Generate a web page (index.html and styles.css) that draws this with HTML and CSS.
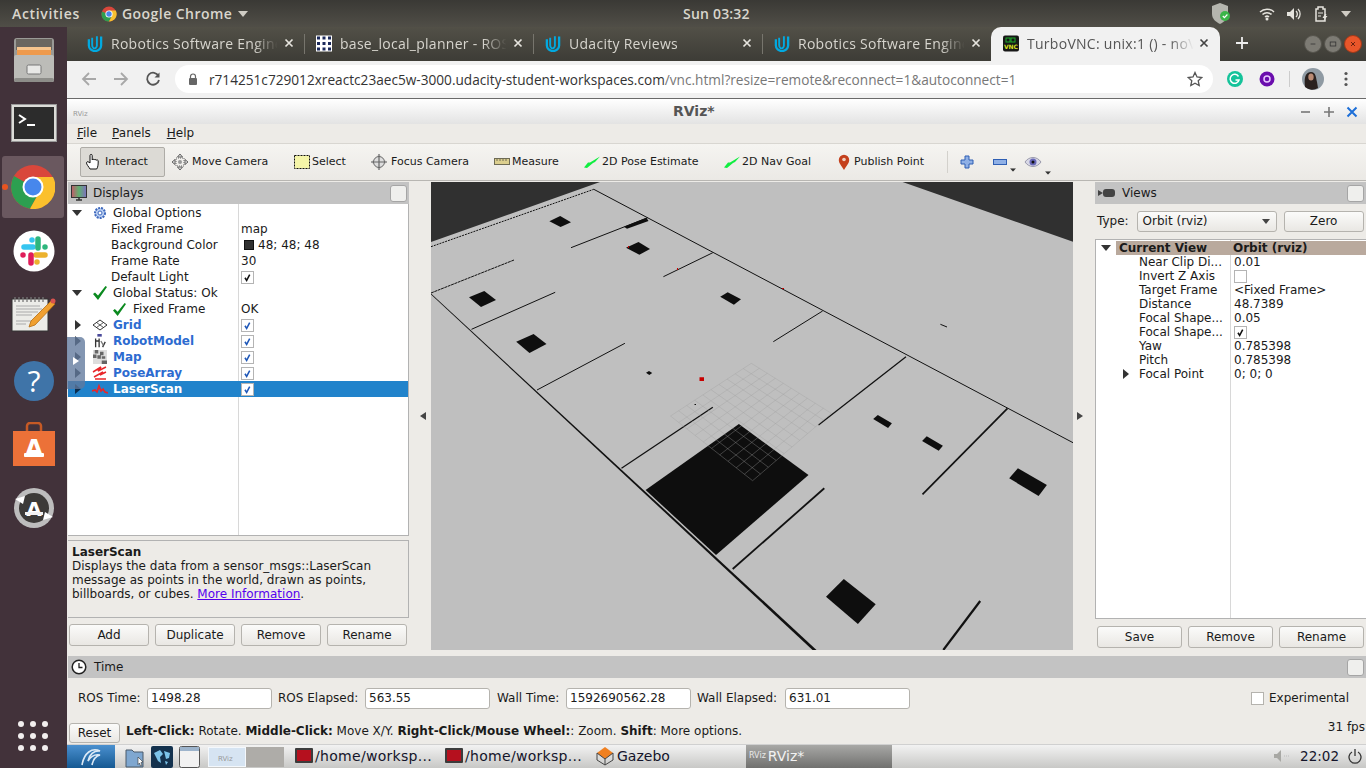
FILE: index.html
```html
<!DOCTYPE html>
<html lang="en">
<head>
<meta charset="utf-8">
<title>RViz over TurboVNC</title>
<link rel="stylesheet" href="styles.css">
</head>
<body>
<svg class="defs" width="0" height="0" aria-hidden="true">
  <symbol id="udacity" viewBox="0 0 16 18"><path d="M1.5 4.5v6.5a6.5 6 0 0 0 13 0V1.5" fill="none" stroke="#02a9e0" stroke-width="2.4"/><path d="M10 1.2v10.3a2.6 2.6 0 0 1-3.6 2.4C5.3 13 5 12 5 10.5V3" fill="none" stroke="#02a9e0" stroke-width="2"/></symbol>
  <symbol id="x" viewBox="0 0 10 10"><path d="M1.5 1.5l7 7M8.5 1.5l-7 7" fill="none" stroke="currentColor" stroke-width="1.7"/></symbol>
  <symbol id="check" viewBox="0 0 13 13"><path d="M3.5 6.8l2 3.2 3.6-7" fill="none" stroke="currentColor" stroke-width="1.8"/></symbol>
  <symbol id="ok" viewBox="0 0 14 14"><path d="M0 8l2-1.500 3 3L12.500 0 14 1 5 14z" fill="#0b8a1f"/></symbol>
  <symbol id="greenarrow" viewBox="0 0 16 12"><path d="M0 11.500L4 6.500 6 6.500 16 .5 11 6 9 7 3 12z" fill="#10ee40"/></symbol>
  <symbol id="tri-d" viewBox="0 0 10 6"><path d="M0 0h10L5 6z" fill="currentColor"/></symbol>
</svg>

<header class="topbar">
  <span class="activities">Activities</span>
  <svg class="top-chrome" viewBox="0 0 16 16"><circle cx="8" cy="8" r="7.5" fill="#d9473b"/><path d="M8 8L1.5 12a7.5 7.5 0 0 0 6.5 3.5z" fill="#2f9e4f"/><path d="M1 5.5a7.5 7.5 0 0 0 .5 6.5L8 15.5 11 10z" fill="#2f9e4f"/><path d="M8 4.5h6.8A7.5 7.5 0 0 1 8 15.5L11 10z" fill="#f5c030"/><circle cx="8" cy="8" r="3.6" fill="#fff"/><circle cx="8" cy="8" r="2.7" fill="#4a86e8"/></svg>
  <span class="appname">Google Chrome</span>
  <svg class="top-tri" viewBox="0 0 10 6"><use href="#tri-d"/></svg>
  <span class="clock">Sun 03:32</span>
  <svg class="tray-shield" viewBox="0 0 20 24"><path d="M9 1l8 3v8c0 5-4 8-8 10-4-2-8-5-8-10V4z" fill="#b5b5ae"/><circle cx="14" cy="14" r="5" fill="#3cb54a"/><path d="M11.800 14l1.600 1.700 3-3.200" fill="none" stroke="#fff" stroke-width="1.200"/></svg>
  <svg class="tray-wifi" viewBox="0 0 16 14"><path d="M1 5a10 10 0 0 1 14 0M3.500 7.500a6.500 6.500 0 0 1 9 0M6 10a3 3 0 0 1 4 0" fill="none" stroke="#e6e4de" stroke-width="1.500"/><circle cx="8" cy="12" r="1.500" fill="#e6e4de"/></svg>
  <svg class="tray-vol" viewBox="0 0 16 14"><path d="M1 5h3l4-4v12l-4-4H1z" fill="#e6e4de"/><path d="M10 4a4 4 0 0 1 0 6M12 2a7 7 0 0 1 0 10" fill="none" stroke="#e6e4de" stroke-width="1.300"/></svg>
  <svg class="tray-bat" viewBox="0 0 14 16"><path d="M1 3h2V1h5v2h2v12H1z" fill="none" stroke="#e6e4de" stroke-width="1.500"/><path d="M3 7h5M3 10h3" stroke="#e6e4de"/><path d="M10 8l-2.500 4h2l-1 3 4-5h-2l1-2z" fill="#e6e4de"/></svg>
  <svg class="tray-tri" viewBox="0 0 10 6"><use href="#tri-d"/></svg>
</header>

<div class="below">
  <nav class="dock">
    <div class="dock-item">
      <svg class="ic-cab" viewBox="0 0 42 44"><rect x="1" y="0" width="40" height="44" rx="3" fill="#9a9a96"/><rect x="3" y="1" width="36" height="11" fill="#6a6660"/><rect x="4" y="9" width="34" height="3" fill="#f6c48e"/><rect x="4" y="12" width="34" height="5" fill="#ee9a4d"/><rect x="1" y="17" width="40" height="27" rx="2" fill="#bcbcb8"/><rect x="1" y="40" width="40" height="4" rx="2" fill="#8d8d89"/><rect x="14" y="27" width="14" height="9" rx="1.500" fill="#e8e8e6" stroke="#777"/></svg>
    </div>
    <div class="dock-item">
      <svg class="ic-term" viewBox="0 0 46 38"><rect x=".5" y=".5" width="45" height="37" fill="#dcdcd8" stroke="#999"/><rect x="3" y="3" width="40" height="32" fill="#2c2c2c"/><path d="M8 11l6 4-6 4" fill="none" stroke="#fff" stroke-width="2"/><path d="M16 21h8" stroke="#fff" stroke-width="2"/></svg>
    </div>
    <div class="dock-item dock-active">
      <span class="dock-dot"></span>
      <svg class="ic-chrome" viewBox="0 0 44 44"><circle cx="22" cy="22" r="22" fill="#d9473b"/><path d="M3 11a22 22 0 0 0 16 32.800L29 26z" fill="#2c9f50"/><path d="M22 12h20a22 22 0 0 1-23 31.800L29 26z" fill="#fbc02d"/><circle cx="22" cy="22" r="10.500" fill="#fff"/><circle cx="22" cy="22" r="8.500" fill="#4787ec"/></svg>
    </div>
    <div class="dock-item">
      <svg class="ic-slack" viewBox="0 0 42 42"><circle cx="21" cy="21" r="20.500" fill="#fff"/><g stroke-width="5.500" stroke-linecap="round" fill="none"><path d="M11 17h9M19 10v0" stroke="#36c5f0"/><path d="M25 9v9M32 17v0" stroke="#2eb67d"/><path d="M23 25h9M24 32v0" stroke="#ecb22e"/><path d="M18 25v8M10 25v0" stroke="#e01e5a"/></g></svg>
    </div>
    <div class="dock-item">
      <svg class="ic-note" viewBox="0 0 46 36"><rect x="1" y="3" width="36" height="32" fill="#ecece8" stroke="#333"/><path d="M5 10h24M5 13h26M5 16h22M5 19h16M5 25h18M5 28h10" stroke="#aaa"/><path d="M4 1v5M8 1v5M12 1v5M16 1v5M20 1v5M24 1v5M28 1v5M32 1v5" stroke="#777" stroke-width="1.300"/><path d="M20 25l20-20 4 3-20 21-6 2z" fill="#f0a030" stroke="#b46d12" stroke-width=".8"/><circle cx="42" cy="5" r="2.500" fill="#d9534f"/></svg>
    </div>
    <div class="dock-item dock-help">
      <svg class="ic-help" viewBox="0 0 40 40"><circle cx="20" cy="20" r="20" fill="#3f74a8"/><text x="20" y="31" text-anchor="middle" class="help-q">?</text></svg>
    </div>
    <div class="dock-item">
      <svg class="ic-store" viewBox="0 0 42 44"><path d="M14 10V4a3 3 0 0 1 3-3h8a3 3 0 0 1 3 3v6" fill="none" stroke="#c65a25" stroke-width="2.500"/><rect x="0" y="9" width="42" height="35" fill="#ec7138"/><text x="21" y="35" text-anchor="middle" class="store-a">A</text><rect x="11" y="31" width="20" height="4" rx="1" fill="#fff"/></svg>
    </div>
    <div class="dock-item">
      <svg class="ic-upd" viewBox="0 0 42 42"><circle cx="21" cy="21" r="20" fill="#bdbdbd"/><circle cx="21" cy="21" r="15" fill="#3c3a38"/><path d="M2 12l10-3-2 8zM40 30l-10 3 2-8z" fill="#fff"/><text x="21" y="29" text-anchor="middle" class="upd-a">A</text><rect x="12" y="25" width="18" height="3" fill="#f2f2f2"/></svg>
    </div>
    <div class="dock-grid">
      <i></i><i></i><i></i><i></i><i></i><i></i><i></i><i></i><i></i>
    </div>
  </nav>

  <div class="browser">
    <div class="tabstrip">
      <div class="tab"><svg class="favicon"><use href="#udacity"/></svg><span class="tab-label">Robotics Software Engineer</span><svg class="tab-x"><use href="#x"/></svg></div>
      <div class="tab"><svg class="favicon" viewBox="0 0 16 16"><rect width="16" height="16" fill="#fff"/><path d="M1 2.500h14M1 8h14M1 13.500h14" stroke="#1c2a5c" stroke-width="3" stroke-dasharray="3 2.500"/></svg><span class="tab-label">base_local_planner - ROS Wiki</span><svg class="tab-x"><use href="#x"/></svg></div>
      <div class="tab"><svg class="favicon"><use href="#udacity"/></svg><span class="tab-label">Udacity Reviews</span><svg class="tab-x"><use href="#x"/></svg></div>
      <div class="tab tab-last"><svg class="favicon"><use href="#udacity"/></svg><span class="tab-label">Robotics Software Engineer</span><svg class="tab-x"><use href="#x"/></svg></div>
      <div class="tab tab-active"><svg class="favicon" viewBox="0 0 16 16"><rect width="16" height="16" rx="2" fill="#171717"/><text x="8" y="13" text-anchor="middle" class="vnc">VNC</text><rect x="3" y="2.500" width="4" height="4" fill="none" stroke="#1fae2a"/><rect x="8" y="2.500" width="4" height="4" fill="none" stroke="#1fae2a"/></svg><span class="tab-label">TurboVNC: unix:1 () - noVNC</span><svg class="tab-x"><use href="#x"/></svg></div>
      <svg class="newtab" viewBox="0 0 14 14"><path d="M7 1v12M1 7h12" stroke="#eee" stroke-width="1.800"/></svg>
      <div class="winbtns">
        <span class="winbtn"><svg viewBox="0 0 10 10"><path d="M2 5h6" stroke="#333" stroke-width="1"/></svg></span>
        <span class="winbtn"><svg viewBox="0 0 10 10"><rect x="1.500" y="2.500" width="7" height="5" fill="none" stroke="#333"/></svg></span>
        <span class="winbtn winbtn-close"><svg viewBox="0 0 10 10"><path d="M2.500 2.500l5 5M7.500 2.500l-5 5" stroke="#5a1c0c" stroke-width="1.100"/></svg></span>
      </div>
    </div>

    <div class="omnibar">
      <svg class="nav-ic" viewBox="0 0 16 16"><path d="M15 8H2M8 2L2 8l6 6" fill="none" stroke="#a8a8a8" stroke-width="1.800"/></svg>
      <svg class="nav-ic" viewBox="0 0 16 16"><path d="M1 8h13M8 2l6 6-6 6" fill="none" stroke="#a8a8a8" stroke-width="1.800"/></svg>
      <svg class="nav-ic" viewBox="0 0 16 16"><path d="M13.500 5A6 6 0 1 0 14 9" fill="none" stroke="#555" stroke-width="1.800"/><path d="M14.500 1.500v5h-5z" fill="#555"/></svg>
      <div class="urlbar">
        <svg class="lock" viewBox="0 0 10 12"><path d="M2.500 5V3.500a2.500 2.500 0 0 1 5 0V5" fill="none" stroke="#666" stroke-width="1.200"/><rect x="1" y="5" width="8" height="7" rx="1" fill="#666"/></svg>
        <span class="url"><span class="url-host">r714251c729012xreactc23aec5w-3000.udacity-student-workspaces.com</span>/vnc.html?resize=remote&amp;reconnect=1&amp;autoconnect=1</span>
        <svg class="star" viewBox="0 0 16 16"><path d="M8 1.500l2 4.500 4.800.5-3.600 3.200 1 4.800L8 12.200 3.800 14.500l1-4.800L1.200 6.500 6 6z" fill="none" stroke="#555" stroke-width="1.300"/></svg>
      </div>
      <svg class="ext-g" viewBox="0 0 16 16"><circle cx="8" cy="8" r="8" fill="#15c39a"/><path d="M11.500 5.500A4.500 4.500 0 1 0 12 9H8.500" fill="none" stroke="#fff" stroke-width="1.500"/></svg>
      <svg class="ext-p" viewBox="0 0 16 16"><circle cx="8" cy="8" r="7.500" fill="#6a0dad"/><circle cx="8" cy="8" r="3" fill="none" stroke="#e8c8ff" stroke-width="1.500"/></svg>
      <span class="omni-sep"></span>
      <svg class="avatar" viewBox="0 0 22 22"><circle cx="11" cy="11" r="11" fill="#8f9aa3"/><path d="M3 19c-1-8 0-15 6-15 5 0 5 6 6 10l1 6a11 11 0 0 1-13-1z" fill="#2a211f"/><ellipse cx="9" cy="9" rx="2.700" ry="3.500" fill="#b98a74"/></svg>
      <svg class="menu-dots" viewBox="0 0 4 16"><circle cx="2" cy="2.500" r="1.600" fill="#555"/><circle cx="2" cy="8" r="1.600" fill="#555"/><circle cx="2" cy="13.500" r="1.600" fill="#555"/></svg>
    </div>

    <div class="rviz">
      <div class="rv-title">
        <svg class="rv-logo" viewBox="0 0 18 12"><text x="0" y="10" class="rv-logo-t">RViz</text></svg>
        <span class="rv-title-text">RViz*</span>
        <div class="rv-winbtns">
          <svg viewBox="0 0 12 12"><path d="M1 6h9" stroke="#777" stroke-width="1.600"/></svg>
          <svg viewBox="0 0 12 12"><path d="M1 6h10M6 1v10" stroke="#777" stroke-width="1.600"/></svg>
          <svg viewBox="0 0 12 12"><path d="M1.500 1.500l9 9M10.500 1.500l-9 9" stroke="#1d6fd8" stroke-width="2"/></svg>
        </div>
      </div>
      <div class="rv-menu"><span><u>F</u>ile</span><span><u>P</u>anels</span><span><u>H</u>elp</span></div>
      <div class="rv-tools">
        <div class="tool tool-on"><svg viewBox="0 0 18 18" class="t-ic"><path d="M6 16c-1-2-4-5-3.500-6.500S5 9 6 10V2.500c0-1.500 2.200-1.500 2.200 0V7c0-1 2-1 2 0 0-.8 2-.8 2 .3 0-.7 2-.5 2 .5 0 3 0 6-1.500 8.200z" fill="#fff" stroke="#111" stroke-width="1"/></svg>Interact</div>
        <div class="tool"><svg viewBox="0 0 18 18" class="t-ic"><path d="M9 1l2.500 3h-5zM9 17l2.500-3h-5zM1 9l3-2.500v5zM17 9l-3-2.500v5z" fill="#ddd" stroke="#444" stroke-width=".8"/><rect x="5" y="5" width="8" height="8" fill="none" stroke="#666" stroke-dasharray="1 1"/><circle cx="9" cy="9" r="2" fill="#999"/></svg>Move Camera</div>
        <div class="tool"><svg viewBox="0 0 16 14" class="t-ic t-sel"><rect x=".5" y=".5" width="15" height="13" fill="#f5f5a8" stroke="#111" stroke-dasharray="2 1"/></svg>Select</div>
        <div class="tool"><svg viewBox="0 0 18 18" class="t-ic"><circle cx="9" cy="9" r="5.500" fill="#ddd" stroke="#666"/><path d="M9 1v16M1 9h16" stroke="#666" stroke-width="1.200"/><path d="M9 1l1.500 2h-3zM9 17l1.500-2h-3zM1 9l2-1.500v3zM17 9l-2-1.500v3z" fill="#999"/></svg>Focus Camera</div>
        <div class="tool"><svg viewBox="0 0 16 7" class="t-ic t-ruler"><rect x=".5" y=".5" width="15" height="6" fill="#dccf8e" stroke="#6e6b55"/><path d="M3 1v2M6 1v2M9 1v2M12 1v2" stroke="#6e6b55"/></svg>Measure</div>
        <div class="tool"><svg class="t-ic t-arrow"><use href="#greenarrow"/></svg>2D Pose Estimate</div>
        <div class="tool"><svg class="t-ic t-arrow"><use href="#greenarrow"/></svg>2D Nav Goal</div>
        <div class="tool"><svg viewBox="0 0 12 16" class="t-ic t-pin"><path d="M6 16C3 11 .8 9 .8 6a5.200 5.200 0 0 1 10.400 0c0 3-2.200 5-5.200 10z" fill="#c4401c"/><circle cx="6" cy="5.500" r="1.800" fill="#f0d0c0"/></svg>Publish Point</div>
        <span class="tool-sep"></span>
        <svg class="t-plus" viewBox="0 0 14 14"><path d="M5 1h4v4h4v4H9v4H5V9H1V5h4z" fill="#8fb0e6" stroke="#2f5fb3"/></svg>
        <span class="t-drop"><svg class="t-minus" viewBox="0 0 14 6"><rect x=".5" y=".5" width="13" height="5" fill="#8fb0e6" stroke="#2f5fb3"/></svg><svg class="t-caret" viewBox="0 0 10 6"><use href="#tri-d"/></svg></span>
        <span class="t-drop t-drop-eye"><svg class="t-eye" viewBox="0 0 18 12"><path d="M1 6c4-6 12-6 16 0-4 6-12 6-16 0z" fill="#d8d8e6" stroke="#9a9aac"/><circle cx="9" cy="6" r="3.500" fill="#6868b8"/><circle cx="9" cy="6" r="1.500" fill="#111"/></svg><svg class="t-caret" viewBox="0 0 10 6"><use href="#tri-d"/></svg></span>
      </div>

      <div class="rv-main">
        <aside class="left">
          <div class="dock-title">
            <svg class="dt-ic" viewBox="0 0 16 16"><rect x=".5" y=".5" width="15" height="12" fill="url(#mon)" stroke="#333"/><path d="M5 15h6M8 13v2" stroke="#333" stroke-width="1.500"/><defs><linearGradient id="mon"><stop offset="0" stop-color="#c25a6a"/><stop offset=".5" stop-color="#5fb070"/><stop offset="1" stop-color="#7f6fc0"/></linearGradient></defs></svg>
            <span>Displays</span><span class="float"></span>
          </div>
          <div class="tree">
            <div class="row"><div class="name"><svg class="tw tw-d" viewBox="0 0 10 6"><use href="#tri-d"/></svg><svg class="ricon" viewBox="0 0 14 14"><circle cx="7" cy="7" r="5" fill="#bcd0f2" stroke="#3d68bd" stroke-width="2" stroke-dasharray="2 1"/><circle cx="7" cy="7" r="2" fill="#fff" stroke="#3d68bd"/></svg>Global Options</div><div class="val"></div></div>
            <div class="row"><div class="name leaf">Fixed Frame</div><div class="val">map</div></div>
            <div class="row"><div class="name leaf">Background Color</div><div class="val"><i class="swatch"></i>48; 48; 48</div></div>
            <div class="row"><div class="name leaf">Frame Rate</div><div class="val">30</div></div>
            <div class="row"><div class="name leaf">Default Light</div><div class="val"><svg class="cb"><use href="#check"/></svg></div></div>
            <div class="row"><div class="name"><svg class="tw tw-d" viewBox="0 0 10 6"><use href="#tri-d"/></svg><svg class="ricon"><use href="#ok"/></svg>Global Status: Ok</div><div class="val"></div></div>
            <div class="row"><div class="name sub"><svg class="ricon-s"><use href="#ok"/></svg>Fixed Frame</div><div class="val">OK</div></div>
            <div class="row on"><div class="name"><svg class="tw" viewBox="0 0 6 10"><path d="M0 0v10l6-5z" fill="#333"/></svg><svg class="ricon" viewBox="0 0 16 12"><path d="M1 6l7-5 7 5-7 5z" fill="none" stroke="#333"/><path d="M4.500 3.500l7 5M11.500 3.500l-7 5" stroke="#333" stroke-width=".8"/></svg>Grid</div><div class="val"><svg class="cb cb-b"><use href="#check"/></svg></div></div>
            <div class="row on"><div class="name"><svg class="tw" viewBox="0 0 6 10"><path d="M0 0v10l6-5z" fill="#333"/></svg><svg class="ricon" viewBox="0 0 16 16"><rect x="5" y="0" width="5" height="3" fill="#4a4a9a"/><path d="M3 5v10M7 5v10M3 8h4M11 15l3-6" stroke="#333" stroke-width="1.500"/><path d="M9 8l3 5" stroke="#777" stroke-width="1.500"/></svg>RobotModel</div><div class="val"><svg class="cb cb-b"><use href="#check"/></svg></div></div>
            <div class="row on"><div class="name"><svg class="tw" viewBox="0 0 6 10"><path d="M0 0v10l6-5z" fill="#333"/></svg><svg class="ricon" viewBox="0 0 16 16"><rect width="16" height="16" fill="#ddd"/><path d="M2 0h4v4H2zM8 2h4v4H8zM0 5h4v4H0zM5 6h4v4H5zM10 7h4v3h-4zM10 12h6v4h-6z" fill="#666"/></svg>Map</div><div class="val"><svg class="cb cb-b"><use href="#check"/></svg></div></div>
            <div class="row on"><div class="name"><svg class="tw" viewBox="0 0 6 10"><path d="M0 0v10l6-5z" fill="#333"/></svg><svg class="ricon" viewBox="0 0 16 14"><path d="M1 6l8-5-3 4 8-4M2 11l9-5-3 3 6-3M3 13h11" fill="none" stroke="#e8262a" stroke-width="1.500"/></svg>PoseArray</div><div class="val"><svg class="cb cb-b"><use href="#check"/></svg></div></div>
            <div class="row on selected"><div class="name"><svg class="tw" viewBox="0 0 6 10"><path d="M0 0v10l6-5z" fill="#0c2c4c"/></svg><svg class="ricon" viewBox="0 0 16 10"><path d="M0 7l3-1 2 2 2-6 2 5 2-2 2 3 3 1" fill="none" stroke="#e8262a" stroke-width="1.700"/></svg>LaserScan</div><div class="val"><svg class="cb cb-b"><use href="#check"/></svg></div></div>
          </div>
          <div class="vsplit-dots"></div>
          <div class="helpbox">
            <b>LaserScan</b><br>Displays the data from a sensor_msgs::LaserScan<br>message as points in the world, drawn as points,<br>billboards, or cubes. <a href="#info">More Information</a>.
          </div>
          <div class="btnrow btnrow-left"><button>Add</button><button>Duplicate</button><button>Remove</button><button>Rename</button></div>
        </aside>

        <div class="gutter"><i class="arr-l"></i></div>

        <svg class="scene" viewBox="431 182 642 468" preserveAspectRatio="none">
          <rect x="431" y="182" width="642" height="468" fill="#bfbfbf"/>
          <path d="M431 182H600L431 242zM902.600 182H1073V241.700z" fill="#303030"/>
          <g fill="none" stroke="#111">
            <path d="M431 246.700L593.800 189.300" stroke-dasharray="2 1"/>
            <path d="M593.800 189.300L1073 442.700"/>
            <path d="M431 293L514 260" stroke-dasharray="3 .6"/>
            <path d="M571 247.700L647.700 217.700"/>
            <path d="M471.500 329.300L555.200 292.300"/>
            <path d="M663.400 276.700L712.800 252.700"/>
            <path d="M537 390L624.900 343.300"/>
            <path d="M773.300 341.700L822.600 311"/>
            <path d="M818.500 425L906 356.700" stroke-width="1.300"/>
            <path d="M621.500 468.300L712.800 407.300" stroke-width="1.300"/>
            <path d="M922.500 494.300L1007.500 408.300" stroke-width="1.700"/>
            <path d="M732.700 569L824.300 488.300" stroke-width="1.800"/>
            <path d="M943.300 650L980.200 601" stroke-width="2.200"/>
            <path d="M940.400 324.300L947 327"/>
          </g>
          <path d="M431 293.500L816.500 650H812.500L431 294.500z" fill="#111"/>
          <g fill="#0e0e0e">
            <path d="M645.600 490L738.900 424 808.500 475 716 555z"/>
            <path d="M549.400 221.300L560.200 216 571 222.300 560.600 227z"/>
            <path d="M624 226.700L646.400 217.700 648.500 221 627 228.700z"/>
            <path d="M626 247.700L638.500 242 650 249 639.400 254.700z"/>
            <path d="M469 297.300L484.300 291 496 300 481 307z"/>
            <path d="M516.200 341.700L533.600 334 546.500 344 529.500 353z"/>
            <path d="M720.200 296.700L727.700 292.300 741 299.300 733.900 304.700z"/>
            <path d="M646 372.700L649 371 652.200 373 649.300 375z"/>
            <path d="M694.500 404h1.500v1h-1.500z"/>
            <path d="M873.200 419L877.800 415 891.900 423.300 888.100 428z"/>
            <path d="M922.100 441L926.700 436.300 942.900 445.700 938.700 450.700z"/>
            <path d="M1009.200 478.300L1017.900 468.300 1046.900 485 1038.600 496z"/>
            <path d="M826 596.700L843.800 579 875.700 604.300 857.900 624z"/>
          </g>
          <path d="M699.500 377.300h4.500V381h-4.500zM677 268h1v2h-1zM782 288h2v1h-2zM628 246h1v2h-1z" fill="#c80000"/>
          <path class="grid3d" d="M751.300 363.300L670.500 416M759.300 368.300L678.700 422.500M767.300 373.300L686.900 428.900M775.300 378.300L695.100 435.400M783.300 383.300L703.300 441.900M791.300 388.300L711.600 448.400M799.300 393.300L719.800 454.800M807.300 398.300L728 461.300M815.300 403.300L736.200 467.800M823.300 408.300L744.400 474.200M831.300 413.300L752.600 480.700M751.300 363.300L831.300 413.300M743.200 368.600L823.400 420M735.100 373.800L815.600 426.800M727.100 379.100L807.700 433.500M719 384.400L799.800 440.300M710.900 389.600L792 447M702.800 394.900L784.100 453.700M694.700 400.200L776.200 460.500M686.700 405.500L768.300 467.200M678.600 410.700L760.500 474M670.500 416L752.600 480.700"/>
        </svg>

        <div class="gutter gutter-r"><i class="arr-r"></i></div>

        <aside class="right">
          <div class="dock-title dock-title-r">
            <svg class="dt-cam" viewBox="0 0 18 10"><path d="M0 2l5 3-5 3z" fill="#444"/><rect x="5" y="1" width="12" height="8" rx="3" fill="#444"/></svg>
            <span>Views</span><span class="float"></span>
          </div>
          <div class="typerow">
            <span>Type:</span>
            <div class="combo"><span>Orbit (rviz)</span><svg viewBox="0 0 10 6"><use href="#tri-d"/></svg></div>
            <button class="zero">Zero</button>
          </div>
          <div class="vtree">
            <div class="vhead"><svg class="vtw" viewBox="0 0 10 6"><use href="#tri-d"/></svg><div class="vh-name">Current View</div><div class="vh-val">Orbit (rviz)</div></div>
            <div class="vrow"><div class="vname">Near Clip Di...</div><div class="vval">0.01</div></div>
            <div class="vrow"><div class="vname">Invert Z Axis</div><div class="vval"><span class="cb cb-empty"></span></div></div>
            <div class="vrow"><div class="vname">Target Frame</div><div class="vval">&lt;Fixed Frame&gt;</div></div>
            <div class="vrow"><div class="vname">Distance</div><div class="vval">48.7389</div></div>
            <div class="vrow"><div class="vname">Focal Shape...</div><div class="vval">0.05</div></div>
            <div class="vrow"><div class="vname">Focal Shape...</div><div class="vval"><svg class="cb"><use href="#check"/></svg></div></div>
            <div class="vrow"><div class="vname">Yaw</div><div class="vval">0.785398</div></div>
            <div class="vrow"><div class="vname">Pitch</div><div class="vval">0.785398</div></div>
            <div class="vrow"><div class="vname vname-tw"><svg class="tw" viewBox="0 0 6 10"><path d="M0 0v10l6-5z" fill="#333"/></svg>Focal Point</div><div class="vval">0; 0; 0</div></div>
          </div>
          <div class="btnrow btnrow-right"><button>Save</button><button>Remove</button><button>Rename</button></div>
        </aside>
      </div>

      <div class="hsplit-dots"></div>
      <div class="time-title">
        <svg class="dt-clock" viewBox="0 0 16 16"><circle cx="8" cy="8" r="6.800" fill="#fff" stroke="#222" stroke-width="1.500"/><path d="M8 4v4.500h3.500" fill="none" stroke="#222" stroke-width="1.300"/></svg>
        <span>Time</span><span class="float"></span>
      </div>
      <div class="time-row">
        <label class="tl-1">ROS Time:</label><span class="field">1498.28</span>
        <label class="tl-2">ROS Elapsed:</label><span class="field">563.55</span>
        <label class="tl-3">Wall Time:</label><span class="field">1592690562.28</span>
        <label class="tl-4">Wall Elapsed:</label><span class="field">631.01</span>
        <span class="exp-cb"></span><label class="exp">Experimental</label>
      </div>
      <div class="status">
        <button class="reset">Reset</button>
        <span class="hint"><b>Left-Click:</b> Rotate. <b>Middle-Click:</b> Move X/Y. <b>Right-Click/Mouse Wheel:</b>: Zoom. <b>Shift</b>: More options.</span>
        <span class="fps">31 fps</span>
      </div>
      <div class="taskbar">
        <div class="start"><svg viewBox="0 0 22 20"><path d="M2 18C4 6 12 0 20 4 14 3 9 8 8 14c3-5 7-7 12-6-4 1-7 5-8 10" fill="none" stroke="#dceaf6" stroke-width="1.600"/></svg></div>
        <svg class="tb-folder" viewBox="0 0 20 22"><path d="M1 4h6l2 2h9v15H1z" fill="#7fa7d0" stroke="#4a5a6a"/><path d="M13 11l5 5-2 .5 1 3-1.500.5-1-3-1.500 1.500z" fill="#fff" stroke="#333" stroke-width=".6"/></svg>
        <svg class="tb-globe" viewBox="0 0 22 22"><rect width="22" height="22" rx="2" fill="#14324e"/><path d="M3 7l6-3 3 4-3 3 1 6-3-2zM13 5l6 2-1 5-3 1zM14 15l3 1-2 3z" fill="#7cc4ea"/></svg>
        <svg class="tb-win" viewBox="0 0 21 22"><rect x=".5" y=".5" width="20" height="21" rx="2" fill="#f2f2f2" stroke="#555"/><rect x="1" y="1" width="19" height="4" fill="#9db4cc"/></svg>
        <div class="pager"><div class="page page-on"><svg viewBox="0 0 18 12"><text x="0" y="10" class="rv-logo-t">RViz</text></svg></div><div class="page"></div></div>
        <div class="task task-1"><i class="term-ic"></i>/home/worksp...</div>
        <div class="task task-2"><i class="term-ic"></i>/home/worksp...</div>
        <div class="task task-3"><svg viewBox="0 0 18 20"><path d="M9 1l8 6-8 6-8-6z" fill="#f08020"/><path d="M1 7v7l8 5 8-5V7l-8 6z" fill="none" stroke="#444"/><path d="M9 13v6" stroke="#444"/></svg>Gazebo</div>
        <div class="task-active"><span class="ta-logo">RViz</span>RViz*</div>
        <div class="tb-tray">
          <svg class="tb-spk" viewBox="0 0 18 14"><path d="M1 5h3l4-4v12l-4-4H1z" fill="#a8a8a4"/><path d="M11 7h6" stroke="#bbb" stroke-dasharray="1 1"/></svg>
          <span class="tb-time">22:02</span>
          <svg class="tb-power" viewBox="0 0 14 16"><path d="M4 4a6 6 0 1 0 6 0M7 1v7" fill="none" stroke="#333" stroke-width="1.300"/></svg>
        </div>
      </div>
    </div>
  </div>
</div>

<div class="vnc-handle"><i></i></div>
</body>
</html>
```

FILE: styles.css
```css
* { box-sizing: border-box; }
html, body { margin: 0; padding: 0; }
body {
  width: 1366px; height: 768px; overflow: hidden; position: relative;
  display: flex; flex-direction: column;
  font-family: "DejaVu Sans", sans-serif; font-size: 12px; color: #1a1a1a;
  background: #42323a;
}
svg { display: block; flex: none; }
.defs { position: absolute; }

/* GNOME top bar */
.topbar {
  height: 27px; flex: none; display: flex; align-items: center; position: relative;
  background: linear-gradient(#3a3935, #504e47);
  font-family: "Open Sans", "Noto Sans", sans-serif; font-size: 14px; font-weight: 600; color: #d9d6cd;
}
.activities { margin-left: 12px; width: 89px; letter-spacing: .65px; }
.top-chrome { width: 16px; height: 16px; }
.appname { margin-left: 5px; width: 111px; white-space: nowrap; letter-spacing: .45px; }
.top-tri { width: 10px; height: 6px; margin-left: 5px; color: #cfccc4; }
.clock { position: absolute; left: 683px; top: 4px; letter-spacing: .2px; }
.tray-shield { width: 20px; height: 24px; margin-left: auto; }
.tray-wifi { width: 16px; height: 14px; margin-left: 28px; }
.tray-vol { width: 16px; height: 14px; margin-left: 11px; }
.tray-bat { width: 14px; height: 16px; margin-left: 13px; }
.tray-tri { width: 10px; height: 6px; margin-left: 12px; margin-right: 15px; color: #cfccc4; }

.below { flex: 1; display: flex; min-height: 0; }

/* Ubuntu dock */
.dock { width: 67px; flex: none; background: #42323a; display: flex; flex-direction: column; padding-top: 1px; }
.dock-item { height: 63.5px; flex: none; display: flex; align-items: center; justify-content: center; position: relative; }
.dock-active { background: #6a585f; margin: 0 3px 0 2px; border-radius: 3px; height: 62px; margin-top: 1px; margin-bottom: 1px; }
.dock-dot { position: absolute; left: 0; top: 28px; width: 6px; height: 6px; border-radius: 50%; background: #e95420; }
.dock-help { margin-top: 3px; }
.ic-cab { width: 42px; height: 44px; }
.ic-term { width: 46px; height: 38px; }
.ic-chrome { width: 44px; height: 44px; }
.ic-slack { width: 42px; height: 42px; }
.ic-note { width: 46px; height: 36px; }
.ic-help { width: 40px; height: 40px; }
.ic-store { width: 42px; height: 44px; }
.ic-upd { width: 42px; height: 42px; }
.help-q { font: 30px "Open Sans", sans-serif; fill: #fff; }
.store-a { font: bold 24px "DejaVu Sans", sans-serif; fill: #fff; }
.upd-a { font: bold 20px "DejaVu Sans", sans-serif; fill: #fff; }
.dock-grid { margin-top: auto; margin-bottom: 17px; margin-left: 18px; display: grid; grid-template-columns: repeat(3, 6px); gap: 6px; }
.dock-grid i { width: 6px; height: 6px; border-radius: 50%; background: #f2eeee; }

/* Chrome */
.browser { flex: 1; display: flex; flex-direction: column; min-width: 0; }
.tabstrip {
  height: 34px; flex: none; display: flex; padding-left: 9px; align-items: stretch;
  background: linear-gradient(#525047, #3d3c36);
  font-family: "Open Sans", "Noto Sans", sans-serif; font-size: 14px; color: #d7d5ce;
}
.tab { width: 229px; flex: none; display: flex; align-items: center; padding: 0 0 2px 11px; position: relative; }
.tab::after { content: ""; position: absolute; right: 0; top: 7px; bottom: 7px; width: 1px; background: #77756d; }
.tab-last::after { display: none; }
.favicon { width: 16px; height: 17px; margin-right: 8px; }
.tab-label { width: 170px; overflow: hidden; white-space: nowrap; letter-spacing: .28px; -webkit-mask-image: linear-gradient(to right, #000 84%, transparent 98%); mask-image: linear-gradient(to right, #000 84%, transparent 98%); }
.tab-x { width: 10px; height: 10px; margin-left: 3px; color: #e6e4de; }
.tab-active { background: #f1f1f1; color: #555; border-radius: 10px 10px 0 0; margin-left: -1px; padding-left: 12px; }
.tab-active::after { display: none; }
.tab-active .tab-x { color: #444; margin-left: 2px; }
.vnc { font: bold 6px "DejaVu Sans", sans-serif; fill: #d8e020; }
.newtab { width: 14px; height: 14px; margin: 9px 0 0 15px; }
.winbtns { margin-left: auto; margin-right: 4px; display: flex; gap: 2px; align-items: center; }
.winbtn { width: 18px; height: 18px; border-radius: 50%; background: #7d7b74; padding: 4px; border: 1px solid #55534c; }
.winbtn svg { width: 8px; height: 8px; }
.winbtn-close { background: #e9562a; border-color: #a03818; }

.omnibar { height: 38px; flex: none; display: flex; align-items: center; background: #f1f1f1; border-bottom: 1px solid #6a6a6a; padding-left: 14px; padding-bottom: 1px; }
.nav-ic { width: 16px; height: 16px; margin-right: 16px; }
.urlbar { width: 1038px; height: 28px; margin-left: -2px; background: #fff; border-radius: 14px; display: flex; align-items: center; padding-left: 13px; }
.lock { width: 10px; height: 12px; margin-right: 11px; }
.url { font-family: "Open Sans", "Noto Sans", sans-serif; font-size: 13.65px; color: #777; white-space: nowrap; flex: 1; }
.url-host { color: #333; }
.star { width: 16px; height: 16px; margin-right: 10px; }
.ext-g { width: 16px; height: 16px; margin-left: 14px; }
.ext-p { width: 16px; height: 16px; margin-left: 16px; }
.omni-sep { width: 1px; height: 16px; background: #ccc; margin-left: 14px; }
.avatar { width: 22px; height: 22px; margin-left: 12px; }
.menu-dots { width: 4px; height: 16px; margin-left: 20px; }

/* RViz window */
.rviz { flex: 1; min-height: 0; display: flex; flex-direction: column; background: #edebe7; position: relative; }
.rv-title { height: 25px; flex: none; display: flex; align-items: center; position: relative; background: linear-gradient(#fff, #e3e3e3); }
.rv-logo { width: 18px; height: 12px; margin-left: 6px; }
.rv-logo-t { font: 7px "DejaVu Sans", sans-serif; fill: #999; }
.rv-title-text { position: absolute; left: 606px; top: 4px; font-size: 14px; font-weight: bold; color: #555; }
.rv-winbtns { margin-left: auto; display: flex; gap: 11px; padding-right: 8px; }
.rv-winbtns svg { width: 12px; height: 12px; }
.rv-menu { height: 20px; flex: none; display: flex; align-items: center; padding: 0 0 1px 10px; gap: 15px; border-bottom: 1px solid #d8d6d1; }
.rv-menu span:nth-child(2) { margin-right: 1px; }
.rv-tools {
  height: 37px; flex: none; display: flex; align-items: center; padding: 0 0 1px 13px;
  font-size: 11px; border-bottom: 1px solid #b8b6b2;
  background: linear-gradient(#f5f4f1, #ebe9e5);
}
.tool { height: 30px; display: flex; align-items: center; white-space: nowrap; flex: none; }
.tool:nth-child(1) { width: 85px; margin-right: 6px; padding-left: 3px; }
.tool:nth-child(2) { width: 103px; margin-right: 18px; }
.tool:nth-child(3) { width: 60px; margin-right: 18px; }
.tool:nth-child(4) { width: 105px; margin-right: 18px; }
.tool:nth-child(5) { width: 72px; margin-right: 17px; }
.tool:nth-child(6) { width: 123px; margin-right: 17px; }
.tool:nth-child(7) { width: 95px; margin-right: 18px; }
.tool:nth-child(8) { width: 94px; }
.tool-on { background: #dcdad5; border: 1px solid #aeaca7; border-radius: 2px; }
.t-ic { width: 18px; height: 18px; margin-right: 3px; }
.t-sel { width: 16px; height: 14px; margin: 0 2px 0 2px; }
.t-ruler { width: 16px; height: 7px; margin: 0 2px 0 1px; }
.t-arrow { width: 16px; height: 12px; margin: 0 2px 0 2px; }
.t-pin { width: 12px; height: 16px; margin: 0 4px 0 3px; }
.tool-sep { width: 1px; height: 22px; background: #d3d1cc; margin-left: 18px; }
.t-plus { width: 14px; height: 14px; margin-left: 12px; }
.t-drop { display: flex; position: relative; align-items: center; margin-left: 19px; }
.t-drop-eye { margin-left: 21px; }
.t-minus { width: 14px; height: 6px; }
.t-eye { width: 18px; height: 12px; margin-left: -4px; }
.t-caret { width: 6px; height: 4px; color: #333; position: absolute; right: -9px; bottom: -7px; }

.rv-main { height: 469px; flex: none; display: flex; }
.left { width: 342px; flex: none; display: flex; flex-direction: column; padding-left: 1px; }
.dock-title { height: 22px; flex: none; display: flex; align-items: center; background: #c3c3c3; padding-left: 3px; margin-top: 1px; }
.dock-title > span:first-of-type { margin-left: 6px; }
.dt-ic { width: 16px; height: 16px; }
.float { width: 17px; height: 17px; margin-left: auto; margin-right: 2px; background: #efefed; border: 1px solid #a5a5a5; border-radius: 3px; }
.tree {
  height: 332px; flex: none; background: #fff linear-gradient(#d8d8d8, #d8d8d8) no-repeat 170px 0 / 1px 100%;
  border: 1px solid #b2b2b2; border-top: 0; border-left: 0; padding-top: 1px;
}
.row { height: 16px; display: flex; align-items: center; }
.name { width: 171px; flex: none; display: flex; align-items: center; padding-left: 4px; white-space: nowrap; }
.leaf { padding-left: 43px; }
.sub { padding-left: 45px; }
.tw { width: 6px; height: 10px; margin-left: 3px; margin-right: 11px; }
.tw-d { width: 10px; height: 6px; margin-left: 0; margin-right: 10px; color: #333; }
.ricon { width: 16px; height: 14px; margin-right: 5px; margin-left: 2px; }
.name .tw + .ricon { margin-left: 0; }
.ricon-s { width: 13px; height: 13px; margin-right: 7px; }
.val { padding-left: 2px; display: flex; align-items: center; white-space: nowrap; }
.swatch { width: 10px; height: 10px; background: #303030; border: 1px solid #111; margin: 0 4px 0 3px; }
.cb { width: 13px; height: 13px; background: #fff; border: 1px solid #b4b4b4; color: #111; display: block; padding: 0; overflow: visible; flex: none; }
.cb-b { color: #2058b8; }
.on .name { color: #2d6bd0; font-weight: bold; }
.selected { background: #2183cb; }
.selected .name { color: #fff; }
.vsplit-dots { height: 4px; flex: none; }
.helpbox { height: 78px; flex: none; border: 1px solid #b2b2b2; border-left: 0; padding: 4px 4px; line-height: 14px; overflow: hidden; }
.helpbox a { color: #5500ee; text-decoration: underline; }
button { font: 12px "DejaVu Sans", sans-serif; color: #1a1a1a; background: linear-gradient(#fbfbfa, #e9e7e3); border: 1px solid #b5b3ae; border-radius: 3px; padding: 0; height: 22px; }
.btnrow { display: flex; }
.btnrow-left { gap: 6px; padding: 6px 0 0 1px; }
.btnrow-left button { width: 80px; }

.gutter { width: 22px; flex: none; display: flex; align-items: center; padding-left: 11px; }
.gutter-r { padding-left: 4px; }
.arr-l { width: 0; height: 0; border: 4px solid transparent; border-left: 0; border-right: 6px solid #444; margin-top: 0; }
.arr-r { width: 0; height: 0; border: 4px solid transparent; border-right: 0; border-left: 6px solid #444; }
.scene { width: 642px; height: 468px; flex: none; margin-top: 1px; }
.grid3d { fill: none; stroke: rgba(160,160,160,.45); stroke-width: .8; }

.right { width: 271px; flex: none; display: flex; flex-direction: column; margin-left: 0; }
.gutter-r { width: 22px; }
.dock-title-r { padding-left: 3px; }
.dt-cam { width: 18px; height: 10px; }
.typerow { display: flex; align-items: center; height: 35px; padding: 0 0 1px 2px; flex: none; }
.combo { width: 140px; height: 21px; margin-left: 8px; background: linear-gradient(#fbfbfa, #e9e7e3); border: 1px solid #b5b3ae; border-radius: 3px; display: flex; align-items: center; justify-content: space-between; padding: 0 6px 0 5px; }
.combo svg { width: 8px; height: 5px; color: #444; }
.zero { width: 80px; height: 21px; margin-left: 7px; }
.vtree { height: 380px; flex: none; background: #fff linear-gradient(#d8d8d8, #d8d8d8) no-repeat 134px 0 / 1px 100%; border: 1px solid #b2b2b2; border-right: 0; padding-top: 1px; }
.vhead { height: 14px; display: flex; align-items: center; padding-left: 5px; margin-top: 0; position: relative; font-weight: bold; }
.vtw { width: 10px; height: 6px; color: #333; margin-right: 5px; }
.vh-name { width: 114px; background: #b9a99d; height: 14px; padding-left: 3px; line-height: 14px; white-space: nowrap; flex: none; }
.vh-val { flex: 1; background: #b9a99d; height: 14px; padding-left: 3px; line-height: 14px; }
.vrow { height: 14px; display: flex; align-items: center; line-height: 14px; }
.vname { width: 135px; padding-left: 43px; white-space: nowrap; flex: none; }
.vname-tw { display: flex; align-items: center; padding-left: 27px; }
.vname-tw .tw { margin-left: 0; margin-right: 10px; }
.vval { padding-left: 3px; white-space: nowrap; }
.cb-empty { display: block; }
.btnrow-right { gap: 6px; padding: 7px 0 0 2px; }
.btnrow-right button { width: 85px; }

.hsplit-dots { height: 6px; flex: none; }
.time-title { height: 22px; flex: none; display: flex; align-items: center; background: #c3c3c3; padding-left: 3px; margin-left: 1px; }
.time-title > span:first-of-type { margin-left: 7px; }
.dt-clock { width: 16px; height: 16px; }
.time-row { height: 42px; flex: none; display: flex; align-items: center; padding: 0 0 2px 11px; }
.field { width: 125px; height: 21px; flex: none; background: #fff; border: 1px solid #b5b3ae; border-radius: 3px; padding-left: 3px; line-height: 19px; }
.tl-1 { width: 69px; }
.tl-2 { width: 87px; margin-left: 6px; }
.tl-3 { width: 69px; margin-left: 7px; }
.tl-4 { width: 88px; margin-left: 6px; }
.exp-cb { width: 13px; height: 13px; background: #fff; border: 1px solid #b5b3ae; margin-left: 341px; }
.exp { margin-left: 5px; }
.status { height: 24px; flex: none; display: flex; align-items: center; padding-left: 2px; position: relative; }
.reset { width: 51px; height: 20px; flex: none; margin-top: 1px; }
.hint { margin: -3px 0 0 6px; white-space: nowrap; }
.fps { position: absolute; right: 1px; top: 0; }

.taskbar { flex: 1; min-height: 0; display: flex; align-items: center; background: linear-gradient(#f2f2f2, #c8c8c6); border-top: 1px solid #d0d0d0; font-size: 14px; color: #14142a; position: relative; }
.start { width: 48px; height: 24px; background: linear-gradient(#4a90cf, #13568f); display: flex; align-items: center; justify-content: center; flex: none; }
.start svg { width: 22px; height: 20px; }
.tb-folder { width: 20px; height: 22px; margin-left: 10px; }
.tb-globe { width: 22px; height: 22px; margin-left: 6px; }
.tb-win { width: 21px; height: 22px; margin-left: 6px; }
.pager { display: flex; margin-left: 8px; height: 20px; flex: none; }
.page { width: 38px; height: 20px; background: #aeaca8; }
.page-on { background: #d6e4f2; border: 1px solid #f4f8fc; padding: 3px 9px; }
.page svg { width: 18px; height: 12px; }
.task { display: flex; align-items: center; white-space: nowrap; flex: none; gap: 2px; padding-bottom: 2px; }
.term-ic { width: 18px; height: 15px; background: #b5101e; border: 2px solid #3c3c3c; border-radius: 1px; flex: none; }
.task-1 { margin-left: 11px; width: 150px; letter-spacing: .3px; }
.task-2 { width: 150px; letter-spacing: .3px; }
.task-3 { width: 150px; margin-left: 1px; gap: 3px; }
.task-3 svg { width: 18px; height: 20px; }
.task-active { width: 146px; height: 24px; flex: none; background: linear-gradient(#a8a8a6, #6e6e6c); color: #f2f2f2; display: flex; align-items: center; padding: 0 0 2px 3px; gap: 2px; }
.ta-logo { font-size: 8px; color: #e8e8e8; }
.tb-tray { margin-left: auto; display: flex; align-items: center; padding-bottom: 2px; }
.tb-spk { width: 18px; height: 14px; }
.tb-time { margin-left: 9px; font-size: 13.5px; }
.tb-power { width: 14px; height: 16px; margin: 0 4px 0 9px; }

/* noVNC control-bar handle, floats above the RViz window */
.vnc-handle { position: absolute; left: 67px; top: 337px; width: 18px; height: 52px; background: rgba(96,120,156,.78); border-radius: 0 5px 5px 0; }
.vnc-handle i { position: absolute; left: 6px; top: 20px; width: 0; height: 0; border: 4px solid transparent; border-right: 0; border-left: 6px solid #fff; }
```
